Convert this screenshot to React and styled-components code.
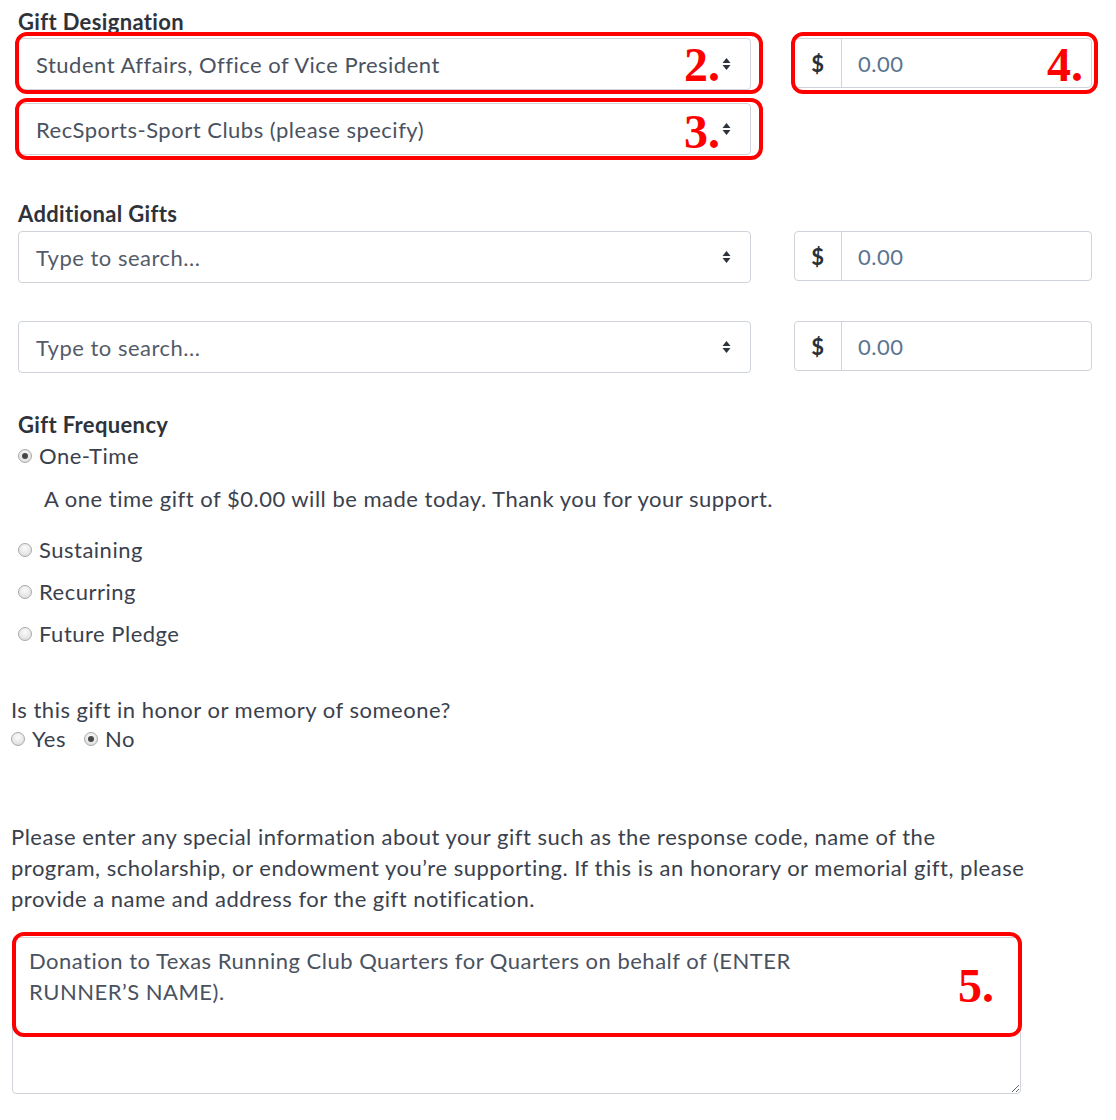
import styled, { createGlobalStyle } from "styled-components";

const GlobalStyle = createGlobalStyle`
	body {
		margin: 0;
		background: #ffffff;
		font-family: Lato, "Open Sans", sans-serif;
		font-size: 22px;
		line-height: 31px;
		letter-spacing: 0.5px;
		color: #3a414d;
	}
`;

const Page = styled.div`
	width: 1116px;
	height: 1120px;
	overflow: hidden;
	padding-top: 6px;
	box-sizing: border-box;
`;

const Section = styled.div`
	padding-left: ${p => p.$indent}px;
`;

const Label = styled.div`
	font-weight: 700;
	letter-spacing: 0.35px;
	color: #2e333b;
	margin-top: ${p => p.$top || 0}px;
	margin-bottom: ${p => p.$bottom || 0}px;
`;

const FieldGrid = styled.div`
	display: grid;
	grid-template-columns: 733px 298px;
	column-gap: 43px;
	row-gap: 13px;
	align-items: start;
	margin-top: ${p => p.$top || 0}px;
`;

const Annotated = styled.div`
	position: relative;
`;

const NotesWrap = styled(Annotated)`
	width: fit-content;
	margin: 23px 0 0 1px;
`;

const Frame = styled.div`
	position: absolute;
	top: ${p => p.$t}px;
	left: ${p => p.$l}px;
	right: ${p => p.$r}px;
	bottom: ${p => (p.$h ? "auto" : `${p.$b}px`)};
	height: ${p => (p.$h ? `${p.$h}px` : "auto")};
	box-sizing: border-box;
	border: 4px solid #ff0000;
	border-radius: 12px;
	pointer-events: none;
`;

const Number = styled.span`
	position: absolute;
	top: ${p => p.$t}px;
	right: ${p => p.$r}px;
	font-family: "Liberation Serif", "Times New Roman", serif;
	font-weight: 700;
	font-size: 48px;
	line-height: 48px;
	letter-spacing: 0;
	color: #ff0000;
`;

const SelectBox = styled.div`
	height: 52px;
	box-sizing: border-box;
	border: 1px solid #cfd4db;
	border-radius: 4px;
	background: #ffffff;
	display: flex;
	align-items: center;
	justify-content: space-between;
	padding: 0 19px 0 17px;
	color: ${p => (p.$placeholder ? "#555c69" : "#4a5260")};
`;

const AmountGroup = styled.div`
	height: 50px;
	box-sizing: border-box;
	border: 1px solid #cfd4db;
	border-radius: 4px;
	display: flex;
	align-items: stretch;
`;

const Addon = styled.div`
	width: 46px;
	border-right: 1px solid #cfd4db;
	display: flex;
	align-items: center;
	justify-content: center;
	color: #2a3037;
	font-weight: 700;
`;

const AmountValue = styled.div`
	display: flex;
	align-items: center;
	padding-left: 16px;
	color: #5a7590;
`;

const RadioRow = styled.div`
	display: flex;
	align-items: center;
	gap: ${p => p.$gap || 0}px;
	margin-top: ${p => p.$top || 0}px;
`;

const RadioOption = styled.label`
	display: flex;
	align-items: center;
	gap: 7px;
`;

const Radio = styled.span`
	width: 14px;
	height: 14px;
	box-sizing: border-box;
	border-radius: 50%;
	border: 1px solid #a9a9a9;
	background: radial-gradient(circle at 50% 35%, #fbfbfb 0%, #e6e6e6 60%, #d4d4d4 100%);
	display: flex;
	align-items: center;
	justify-content: center;
	&::after {
		content: "";
		width: 6px;
		height: 6px;
		border-radius: 50%;
		background: ${p => (p.$checked ? "#474747" : "transparent")};
	}
`;

const Note = styled.div`
	padding-left: 26px;
	margin-top: 12px;
`;

const Text = styled.div`
	margin-top: ${p => p.$top || 0}px;
`;

const Notes = styled.textarea`
	display: block;
	width: 1009px;
	height: 157px;
	box-sizing: border-box;
	margin: 0;
	padding: 7px 16px;
	border: 1px solid #cfd4db;
	border-radius: 4px;
	font-family: Lato, "Open Sans", sans-serif;
	font-size: 22px;
	line-height: 31px;
	letter-spacing: 0.5px;
	color: #4a5260;
	resize: vertical;
	outline: none;
`;

function Arrows() {
	return (
		<svg width="9" height="14" viewBox="0 0 9 14">
			<path d="M0.5 6 L4.5 1 L8.5 6 Z" fill="#2f343b" />
			<path d="M0.5 8 L4.5 13 L8.5 8 Z" fill="#2f343b" />
		</svg>
	);
}

function Select({ value, placeholder }) {
	return (
		<SelectBox $placeholder={placeholder}>
			<span>{value}</span>
			<Arrows />
		</SelectBox>
	);
}

function Amount() {
	return (
		<AmountGroup>
			<Addon>$</Addon>
			<AmountValue>0.00</AmountValue>
		</AmountGroup>
	);
}

export default function App() {
	return (
		<Page>
			<GlobalStyle />
			<Section $indent={18}>
				<Label $bottom={1}>Gift Designation</Label>
				<FieldGrid>
					<Annotated>
						<Select value="Student Affairs, Office of Vice President" />
						<Frame $t={-6} $l={-3} $r={-12} $b={-4}>
							<Number $t={5} $r={39}>2.</Number>
						</Frame>
					</Annotated>
					<Annotated>
						<Amount />
						<Frame $t={-6} $l={-3} $r={-6} $b={-6}>
							<Number $t={5} $r={11}>4.</Number>
						</Frame>
					</Annotated>
					<Annotated>
						<Select value="RecSports-Sport Clubs (please specify)" />
						<Frame $t={-5} $l={-3} $r={-12} $b={-5}>
							<Number $t={6} $r={39}>3.</Number>
						</Frame>
					</Annotated>
				</FieldGrid>

				<Label $top={43} $bottom={2}>Additional Gifts</Label>
				<FieldGrid>
					<Select value="Type to search..." placeholder />
					<Amount />
				</FieldGrid>
				<FieldGrid $top={38}>
					<Select value="Type to search..." placeholder />
					<Amount />
				</FieldGrid>

				<Label $top={36}>Gift Frequency</Label>
				<RadioOption>
					<Radio $checked />
					One-Time
				</RadioOption>
				<Note>A one time gift of $0.00 will be made today. Thank you for your support.</Note>
				<RadioRow $top={20}>
					<RadioOption>
						<Radio />
						Sustaining
					</RadioOption>
				</RadioRow>
				<RadioRow $top={11}>
					<RadioOption>
						<Radio />
						Recurring
					</RadioOption>
				</RadioRow>
				<RadioRow $top={11}>
					<RadioOption>
						<Radio />
						Future Pledge
					</RadioOption>
				</RadioRow>
			</Section>

			<Section $indent={11}>
				<Text $top={45}>Is this gift in honor or memory of someone?</Text>
				<RadioRow $gap={18} $top={-2}>
					<RadioOption>
						<Radio />
						Yes
					</RadioOption>
					<RadioOption>
						<Radio $checked />
						No
					</RadioOption>
				</RadioRow>
				<Text $top={67}>
					Please enter any special information about your gift such as the response code, name of the
					<br />
					program, scholarship, or endowment you’re supporting. If this is an honorary or memorial gift, please
					<br />
					provide a name and address for the gift notification.
				</Text>
				<NotesWrap>
					<Notes
						readOnly
						value={"Donation to Texas Running Club Quarters for Quarters on behalf of (ENTER\nRUNNER’S NAME)."}
					/>
					<Frame $t={-5} $l={0} $r={-1} $h={105}>
						<Number $t={26} $r={24}>5.</Number>
					</Frame>
				</NotesWrap>
			</Section>
		</Page>
	);
}
